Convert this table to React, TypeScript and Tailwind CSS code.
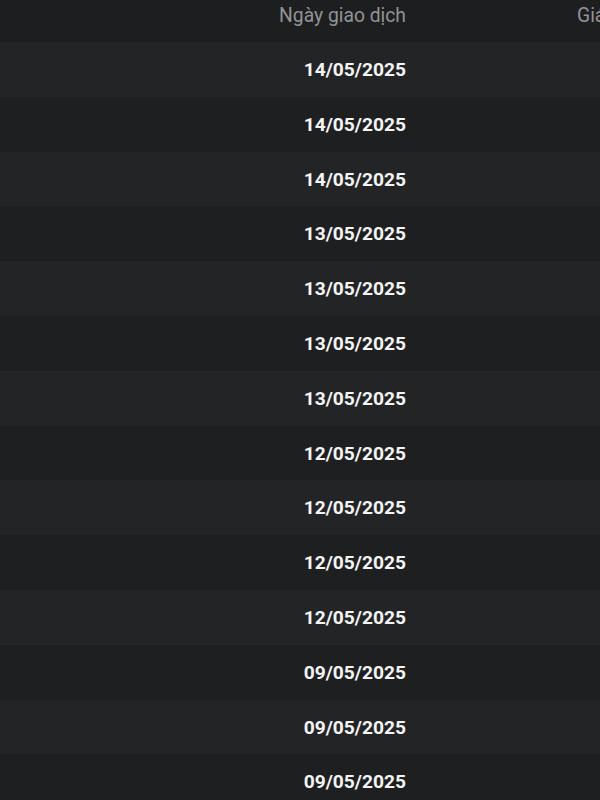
const dates = [
  "14/05/2025",
  "14/05/2025",
  "14/05/2025",
  "13/05/2025",
  "13/05/2025",
  "13/05/2025",
  "13/05/2025",
  "12/05/2025",
  "12/05/2025",
  "12/05/2025",
  "12/05/2025",
  "09/05/2025",
  "09/05/2025",
  "09/05/2025",
];

export default function App() {
  return (
    <div className="w-[600px] h-[800px] overflow-hidden bg-[#1e1f21] font-['Roboto',sans-serif]">
      {/* header */}
      <div className="flex h-[42px] items-start bg-[#1d1e20] whitespace-nowrap">
        <div className="w-[406px] shrink-0 pt-[2px] text-right text-[19.3px] text-[#929396]">
          Ngày giao dịch
        </div>
        <div className="pl-[171px] pt-[2px] text-[19.3px] text-[#929396]">Giá đóng cửa</div>
      </div>

      {/* rows */}
      {dates.map((d, i) => (
        <div
          key={i}
          className={
            "flex h-[54.8px] items-center whitespace-nowrap " +
            (i % 2 === 0 ? "bg-[#232426]" : "bg-[#1e1f21]")
          }
        >
          <div className="w-[406px] shrink-0 pt-[2px] text-right text-[19.2px] font-bold text-[#f4f4f5]">{d}</div>
        </div>
      ))}
    </div>
  );
}
